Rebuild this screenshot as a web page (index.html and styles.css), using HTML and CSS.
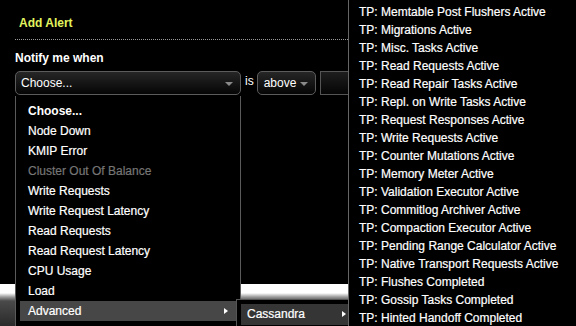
FILE: index.html
```html
<!DOCTYPE html>
<html>
<head>
<meta charset="utf-8">
<link rel="stylesheet" href="styles.css">
</head>
<body>
<div class="page">
  <div class="form">
    <h2 class="title">Add Alert</h2>
    <div class="field-label">Notify me when</div>
    <div class="row">
      <div class="select select-metric"><span>Choose...</span><i class="caret"></i></div>
      <span class="is">is</span>
      <div class="select select-op"><span>above</span><i class="caret"></i></div>
      <div class="input"></div>
    </div>
  </div>
  <div class="footer-bar"></div>

  <ul class="menu menu-main">
    <li class="bold">Choose...</li>
    <li>Node Down</li>
    <li>KMIP Error</li>
    <li class="disabled">Cluster Out Of Balance</li>
    <li>Write Requests</li>
    <li>Write Request Latency</li>
    <li>Read Requests</li>
    <li>Read Request Latency</li>
    <li>CPU Usage</li>
    <li>Load</li>
    <li class="active has-sub">Advanced<i class="sub-arrow"></i></li>
  </ul>

  <ul class="menu menu-cass">
    <li class="active has-sub">Cassandra<i class="sub-arrow"></i></li>
  </ul>

  <ul class="menu menu-tp">
    <li>TP: Memtable Post Flushers Active</li>
    <li>TP: Migrations Active</li>
    <li>TP: Misc. Tasks Active</li>
    <li>TP: Read Requests Active</li>
    <li>TP: Read Repair Tasks Active</li>
    <li>TP: Repl. on Write Tasks Active</li>
    <li>TP: Request Responses Active</li>
    <li>TP: Write Requests Active</li>
    <li>TP: Counter Mutations Active</li>
    <li>TP: Memory Meter Active</li>
    <li>TP: Validation Executor Active</li>
    <li>TP: Commitlog Archiver Active</li>
    <li>TP: Compaction Executor Active</li>
    <li>TP: Pending Range Calculator Active</li>
    <li>TP: Native Transport Requests Active</li>
    <li>TP: Flushes Completed</li>
    <li>TP: Gossip Tasks Completed</li>
    <li>TP: Hinted Handoff Completed</li>
  </ul>
</div>
</body>
</html>
```

FILE: styles.css
```css
* { box-sizing: border-box; }
html, body {
  margin: 0;
  padding: 0;
  background: #000;
}
body {
  font-family: "Liberation Sans", Arial, Helvetica, sans-serif;
  font-size: 12px;
  color: #fff;
}
.page {
  position: relative;
  width: 576px;
  height: 326px;
  overflow: hidden;
  display: flex;
  flex-direction: column;
}
.form {
  padding-left: 15px;
}
.title {
  margin: 0;
  padding: 16px 0 0 4px;
  height: 40px;
  font-size: 12px;
  line-height: 14px;
  font-weight: bold;
  color: #e2f45e;
  border-bottom: 1px dotted #9a9a9a;
}
.field-label {
  margin-top: 11px;
  font-weight: bold;
  line-height: 14px;
  height: 14px;
}
.row {
  margin-top: 6px;
  display: flex;
  align-items: flex-start;
  height: 24px;
}
.select {
  position: relative;
  height: 24px;
  border: 1px solid #5c5c5c;
  border-radius: 5px;
  background: linear-gradient(#262626, #050505);
  line-height: 22px;
  padding-left: 5px;
}
.select-metric { width: 226px; }
.select-op { width: 59px; padding-left: 6px; }
.caret {
  position: absolute;
  top: 10px;
  right: 7px;
  width: 0;
  height: 0;
  border-left: 4px solid transparent;
  border-right: 4px solid transparent;
  border-top: 4px solid #8a8a8a;
}
.is {
  padding: 0 3px 0 4px;
  line-height: 20px;
}
.input {
  margin-left: 4px;
  width: 40px;
  height: 24px;
  border: 1px solid #555;
  background: linear-gradient(#1e1e1e, #050505);
}
.footer-bar {
  margin-top: auto;
  height: 42px;
  background: linear-gradient(#fff 0, #fff 9px, #9a9a9a 13px, #4a4a4a 17px, #2a2a2a 100%);
}

.menu {
  position: absolute;
  margin: 0;
  list-style: none;
  background: #000;
}
.menu li {
  position: relative;
  white-space: nowrap;
  -webkit-text-stroke: 0.2px currentColor;
}
.menu li.bold { -webkit-text-stroke: 0; }
.menu-main {
  left: 15px;
  top: 96px;
  width: 226px;
  height: 240px;
  padding: 5px 0 4px 4px;
  border: 1px solid #5a5a5a;
  border-top: none;
}
.menu-main li {
  height: 20px;
  line-height: 20px;
  padding-left: 8px;
}
.menu li.bold { font-weight: bold; }
.menu li.disabled { color: #767676; }
.menu-main li.active { background: #474747; }
.sub-arrow {
  position: absolute;
  top: 7px;
  right: 12px;
  width: 0;
  height: 0;
  border-top: 3px solid transparent;
  border-bottom: 3px solid transparent;
  border-left: 4px solid #fff;
}
.menu-cass {
  left: 236px;
  top: 299px;
  width: 113px;
  height: 40px;
  padding: 4px 0 0 4px;
  border: 1px solid #555;
}
.menu-cass li {
  height: 21px;
  line-height: 21px;
  padding-left: 6px;
  background: #353535;
}
.menu-cass .sub-arrow { right: 2px; top: 7px; }
.menu-tp {
  left: 348px;
  top: 0;
  width: 240px;
  height: 340px;
  padding: 3px 0 0 10px;
  border-left: 1px solid #666;
}
.menu-tp li {
  height: 18px;
  line-height: 18px;
}
```
